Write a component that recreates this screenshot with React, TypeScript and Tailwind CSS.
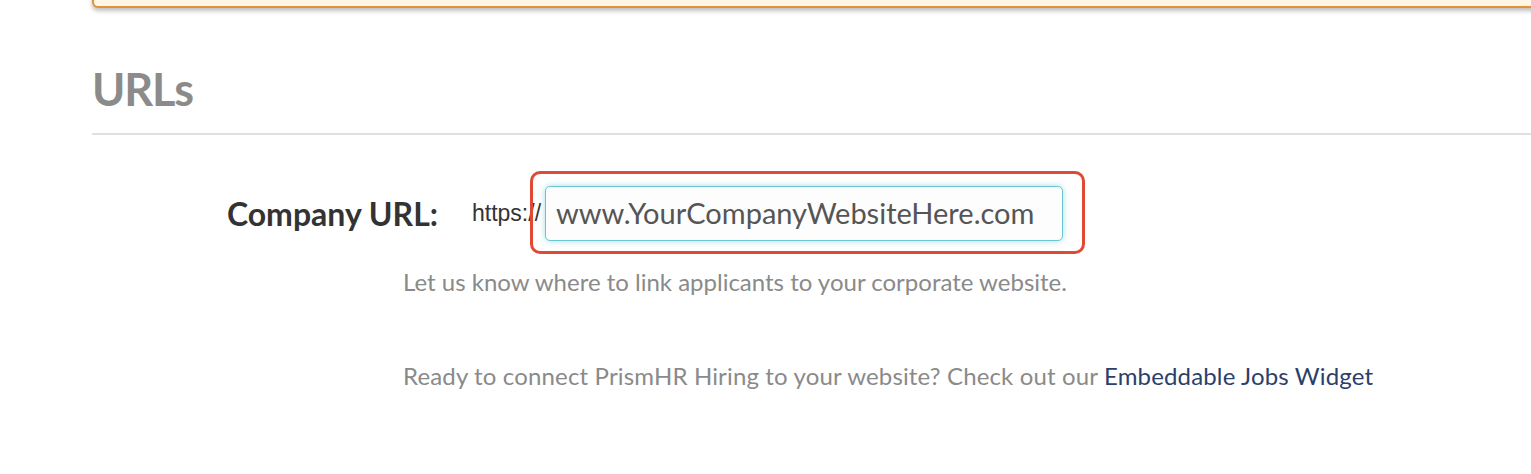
import React from 'react';

const font = { fontFamily: 'Lato, "Open Sans", sans-serif' };

const App: React.FC = () => {
  return (
    <div className="relative w-full h-[474px] bg-white overflow-hidden" style={font}>
      {/* banner cut off at the top */}
      <div className="ml-[92px] -mr-4 -mt-[32px] h-[40px] rounded-md border-2 border-[#e3913c] bg-[#fff6e5] shadow-[0_3px_4px_rgba(0,0,0,0.25)]" />

      <div className="pl-[92px]">
        <h2 className="mt-[56px] text-[45px] leading-[50px] font-bold text-[#8b8b8b] tracking-tight">URLs</h2>
        <div className="mt-[19px] h-[2px] bg-[#e0e0e0]" />

        <div className="relative flex items-center mt-[51px] h-[55px]">
          <label className="w-[346px] text-right text-[32px] font-bold text-[#333]">Company URL:</label>
          <span className="ml-[34px] w-[73px] whitespace-nowrap text-[23px] text-[#333] font-['Liberation_Sans',Arial,sans-serif]">https://</span>
          <div className="relative w-[518px] h-[55px] rounded-[5px] border border-[#6cc5d2] bg-[#fdfdfd] shadow-[0_0_6px_rgba(108,197,210,0.6)] flex items-center pl-[10px]">
            <span className="text-[29px] leading-none -mt-[3px] text-[#555]">www.YourCompanyWebsiteHere.com</span>
          </div>
          {/* highlight annotation */}
          <div className="absolute left-[438px] -top-[15px] w-[555px] h-[83px] rounded-[10px] border-[3px] border-[#e04a35] pointer-events-none" />
        </div>

        <p className="ml-[311px] mt-[26px] text-[24px] leading-[30px] text-[#8a8a8a]">
          Let us know where to link applicants to your corporate website.
        </p>

        <p className="ml-[311px] mt-[64px] text-[24px] leading-[30px] tracking-[0.15px] text-[#8a8a8a]">
          Ready to connect PrismHR Hiring to your website? Check out our{' '}
          <a className="text-[#2b3f6c]">Embeddable Jobs Widget</a>
        </p>
      </div>
    </div>
  );
};

export default App;
